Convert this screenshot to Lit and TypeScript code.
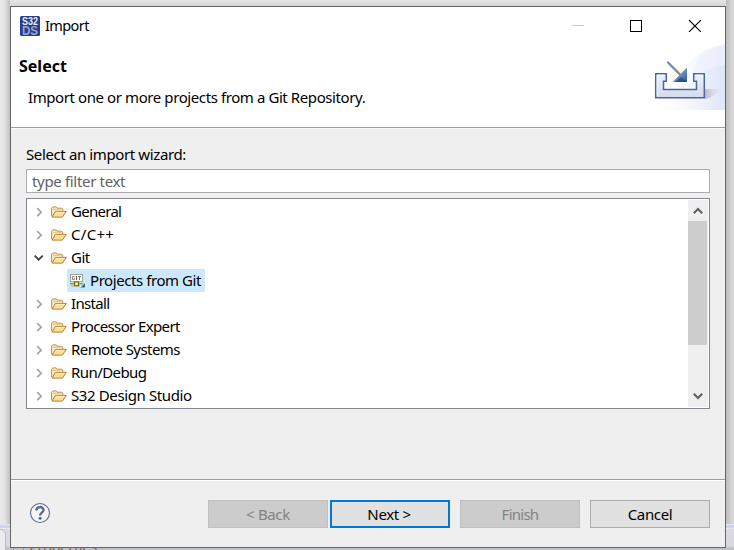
import { LitElement, html, css } from "lit";
import { customElement, state } from "lit/decorators.js";
import { classMap } from "lit/directives/class-map.js";

interface Node { label: string; open?: boolean; child?: boolean; ls: string; }

const NODES: Node[] = [
  { label: "General", ls: "a" },
  { label: "C/C++", ls: "b" },
  { label: "Git", open: true, ls: "c" },
  { label: "Projects from Git", child: true, ls: "d" },
  { label: "Install", ls: "e" },
  { label: "Processor Expert", ls: "f" },
  { label: "Remote Systems", ls: "g" },
  { label: "Run/Debug", ls: "h" },
  { label: "S32 Design Studio", ls: "i" },
];

const folder = html`<svg class="folder" width="16" height="14" viewBox="0 0 16 14">
  <path d="M.6 11.2V3.2L1.8 1.9h3.4l1 1.3h4.6l.9 1v1.8" fill="#fbeec6" stroke="#c48a44"/>
  <path d="M1.8 4.2h8.8" stroke="#e3b878"/>
  <path d="M1 12.1 4.4 6.4h10.9L11.4 12.1Z" fill="#fbdf94" stroke="#b97a34" stroke-linejoin="round"/>
  <path d="M4.9 7.4h8.6" stroke="#fff0c0"/>
</svg>`;

const gitIcon = html`<svg class="git" width="16" height="16" viewBox="0 0 16 16">
  <rect x=".5" y="1.5" width="12" height="7" fill="#fff" stroke="#a3a394"/>
  <g fill="none">
    <path d="M4.6 3.5H2.5v3h2V5.3H3.7" stroke="#8c8c8c"/>
    <path d="M6.5 3v4" stroke="#c23a4b"/>
    <path d="M8 3.5h3M9.5 3.5V7" stroke="#3b9a58"/>
    <path d="M0 10.5h13" stroke="#8f9061"/>
    <path d="M0 11.5h13" stroke="#c7c98a"/>
    <path d="M1 13h9" stroke="#a5a58c"/>
  </g>
  <rect x="4.5" y="9" width="4" height="3.6" fill="#fff36b" stroke="#66661c"/>
  <path d="M15 10V14.5h-4.5Z" fill="#2c6ca4"/>
</svg>`;

@customElement("app-root")
export class AppRoot extends LitElement {
  @state() private selected = "Projects from Git";

  static styles = css`
    :host { display: block; position: relative; width: 734px; height: 550px; overflow: hidden;
      font: 15px/20px "Noto Sans", "Open Sans", sans-serif; color: #000; background: #dedede; }
    * { box-sizing: border-box; }
    svg { display: block; flex: none; }
    .backdrop { position: absolute; inset: 0; background: #e3e3e3; }
    .left { position: absolute; left: 0; top: 0; bottom: 0; width: 10px;
      background: linear-gradient(90deg, #e9e9e9, #e1e1e1 50%, #c0c0c0); }
    .right { position: absolute; right: 0; top: 0; bottom: 0; width: 8px;
      background: linear-gradient(90deg, #bdbdbd, #d2d2d2 60%, #d9d9d9); }
    .top { position: absolute; left: 0; right: 0; top: 0; height: 6px; background: linear-gradient(#e6e6e6, #d7d7d7); }
    .band { position: absolute; left: 0; right: 0; top: 524px; height: 26px;
      background: linear-gradient(#e5e7ef 0 1px, #cfd5e9 1px 4px, #e6e6ec 4px 5px, #d9d9e1 5px 22px, #c0c0c7 24px); }
    .tab { position: absolute; left: -8px; top: 529px; width: 14px; height: 30px; background: #ececee;
      border: 1px solid #bbbcc4; border-radius: 0 6px 0 0; }
    .behind { position: absolute; left: 29px; top: 536px; color: #8a6e68; letter-spacing: -.5px; }
    .tabicon { position: absolute; left: 13px; top: 545px; width: 11px; height: 10px; border: 1px solid #999aa3; }
    .window { position: relative; display: flex; flex-direction: column; width: 716px; height: 542px;
      margin: 0 0 0 10px; top: 6px; border: 1px solid #656565; background: #efefef; }
    .titlebar { height: 38px; flex: none; background: #fff; display: flex; align-items: center; padding: 0 24px 0 9px; }
    .titlebar .name { margin: 0 auto 2px 5px; letter-spacing: -.95px; }
    .titlebar .name { font-size: 14.5px; letter-spacing: -.6px; }
    .ctl { margin-left: 46px; position: relative; top: -.5px; }
    .header { height: 83px; flex: none; background: #fff; border-bottom: 1px solid #9c9d9d; display: flex; justify-content: space-between; }
    .heading { padding: 11px 0 0 8px; }
    h1 { margin: 0; font-size: 16px; line-height: 20px; font-weight: 700; letter-spacing: 0; }
    .heading p { margin: 11px 0 0 9px; line-height: 20px; letter-spacing: -.41px; white-space: nowrap; }
    .art { margin-top: -1px; }
    .body { flex: 1; border-top: 1px solid #fafafa; padding: 14px 15px 0; }
    .label { line-height: 22px; letter-spacing: -.38px; }
    .filter { height: 24px; margin-top: 4px; border: 1px solid #ababb0; background: #fff; color: #626262;
      padding: 0 5px; line-height: 22px; letter-spacing: -.33px; }
    .tree { height: 211px; margin-top: 5px; border: 1px solid #828790; background: #fff; display: flex; padding: 1px 1px 1px 0; }
    .rows { flex: 1; }
    .row { height: 23px; display: flex; align-items: center; padding-left: 7px; }
    .tw { width: 17px; display: flex; justify-content: flex-start; }
    .item { display: flex; align-items: center; height: 23px; line-height: 23px; white-space: nowrap; }
    .item .txt { margin-left: 4px; }
    .row.child .item { width: 138px; margin-left: 16px; padding: 0 4px 0 3px; }
    .row.child .item .txt { margin-left: 4px; }
    .selected .item { background: #cce8ff; }
    .a { letter-spacing: -.72px; } .b { letter-spacing: .3px; } .c { letter-spacing: -.5px; }
    .d { letter-spacing: -.43px; } .e { letter-spacing: -.65px; } .f { letter-spacing: -.63px; }
    .g { letter-spacing: -.57px; } .h { letter-spacing: -.57px; } .i { letter-spacing: -.38px; }
    .scroll { width: 20px; height: 207px; background: #efefef; display: flex; flex-direction: column; align-items: center; }
    .thumb { width: 19px; height: 124px; margin-right: 1px; background: #cdcdcd; }
    .arrow { height: 21px; margin-right: 1px; display: flex; align-items: center; }
    .arrow.down { margin-top: auto; height: 22px; }
    .footer { height: 68px; flex: none; border-top: 1px solid #9c9c9c; box-shadow: inset 0 1px #fff;
      padding: 20px 15px 0 18px; display: flex; align-items: flex-start; }
    .help { margin: 2px auto 0 0; }
    .btn { width: 120px; height: 28px; border: 1px solid #adadad; background: #e1e1e1; font: inherit; color: #000;
      padding: 1px 0 0; text-align: center; line-height: 25px; letter-spacing: -.35px; }
    .btn.primary { border: 2px solid #0078d7; margin-left: 2px; line-height: 23px; padding-right: 2px; }
    .btn.off { background: #ccc; border-color: #bfbfbf; color: #838383; }
    .btn.fin { letter-spacing: -.75px; }
    .gap { margin-left: 10px; }
  `;

  private row(n: Node) {
    return html`<div class=${classMap({ row: true, child: !!n.child, selected: n.label === this.selected })}
      @click=${() => (this.selected = n.label)}>
      <div class="tw">${n.child ? "" : n.open
        ? html`<svg width="10" height="8" viewBox="0 0 10 8"><path d="M.6 1.7 4.7 5.7 8.8 1.7" fill="none" stroke="#404040" stroke-width="1.8"/></svg>`
        : html`<svg width="10" height="10" viewBox="0 0 10 10"><path d="M3.2 1.2 7.2 5.2 3.2 9.2" fill="none" stroke="#a5a5a5" stroke-width="1.7"/></svg>`}</div>
      <div class="item">${n.child ? gitIcon : folder}<span class="txt ${n.ls}">${n.label}</span></div>
    </div>`;
  }

  render() {
    return html`
      <div class="backdrop"><div class="top"></div><div class="left"></div><div class="right"></div>
        <div class="band"></div><div class="tab"></div><div class="tabicon"></div><div class="behind">Properties</div></div>
      <div class="window">
        <div class="titlebar">
          <svg width="20" height="20" viewBox="0 0 20 20">
            <rect width="20" height="20" rx="1.5" fill="#273f8b"/>
            <text x="2" y="9" font-family="Liberation Sans" font-weight="700" font-size="10" fill="#e9edf8" textLength="16" lengthAdjust="spacingAndGlyphs">S32</text>
            <text x="2" y="18.5" font-family="Liberation Sans" font-weight="700" font-size="12" fill="#96a5d8" textLength="16" lengthAdjust="spacingAndGlyphs">DS</text>
          </svg>
          <span class="name">Import</span>
          <svg class="ctl" width="12" height="12" viewBox="0 0 12 12"><path d="M0 5.5h12" stroke="#c9c9c9"/></svg>
          <svg class="ctl" width="12" height="12" viewBox="0 0 12 12"><rect x=".5" y=".5" width="11" height="11" fill="none" stroke="#000"/></svg>
          <svg class="ctl" width="13" height="12" viewBox="0 0 13 12"><path d="M1 0l12 12M13 0l-12 12" stroke="#000" stroke-width="1.1"/></svg>
        </div>
        <div class="header">
          <div class="heading"><h1>Select</h1><p>Import one or more projects from a Git Repository.</p></div>
          <svg class="art" width="75" height="66" viewBox="0 0 75 66">
            <defs>
              <linearGradient id="w" x1="0" x2="1"><stop offset="0" stop-color="#fff" stop-opacity="0"/><stop offset="1" stop-color="#dfe6f8"/></linearGradient>
              <linearGradient id="t" x1="0" y1="0" x2="0" y2="1"><stop offset="0" stop-color="#edf1f7"/><stop offset="1" stop-color="#d3dced"/></linearGradient>
              <linearGradient id="ar" x1="0" y1="0" x2="1" y2="1"><stop offset="0" stop-color="#b9d0ea"/><stop offset="1" stop-color="#24539a"/></linearGradient>
              <linearGradient id="sh" x1="0" x2="1"><stop offset="0" stop-color="#b7a4b8" stop-opacity=".75"/><stop offset="1" stop-color="#d8d7ec" stop-opacity="0"/></linearGradient>
              <radialGradient id="gl"><stop offset="0" stop-color="#fff8c4"/><stop offset="1" stop-color="#fffce8" stop-opacity="0"/></radialGradient>
            </defs>
            <path d="M0 66C18 58 26 32 42 16C52 6 64 2 75 0V66Z" fill="url(#w)" opacity=".65"/>
            <path d="M2 66C26 60 32 46 48 30C58 24 66 22 75 21V66Z" fill="url(#w)"/>
            <path d="M47 16C54 8 64 3 75 0V21C64 22 53 25 43 34Z" fill="#e5ebfa" opacity=".35"/>
            <circle cx="28" cy="29" r="11" fill="url(#gl)"/>
            <path d="M55 45H72Q65 53 55 55Z" fill="url(#sh)"/>
            <path d="M5.7 29.7H16.3V37.3H13.5V45.5H46.5V37.3H43.7V29.7H54.3V53.8H5.7Z" fill="url(#t)" stroke="#47699f" stroke-width="1.5"/>
            <path d="M7.2 31.2h7.4M7.2 31.2V52M45.2 31.2h7.4" fill="none" stroke="#fff" opacity=".75"/>
            <path d="M18 18.5 30 30.5" stroke="#6d8cb8" stroke-width="2.3" stroke-linecap="round"/>
            <path d="M37 23.5V38H22.5Z" fill="url(#ar)"/>
            <path d="M37 38H25L31 33Z" fill="#1d4385" opacity=".7"/>
          </svg>
        </div>
        <div class="body">
          <div class="label">Select an import wizard:</div>
          <div class="filter">type filter text</div>
          <div class="tree">
            <div class="rows">${NODES.map((n) => this.row(n))}</div>
            <div class="scroll">
              <div class="arrow"><svg width="10" height="8" viewBox="0 0 10 8"><path d="M.8 6.3 5 2.1 9.2 6.3" fill="none" stroke="#606060" stroke-width="2.1"/></svg></div>
              <div class="thumb"></div>
              <div class="arrow down"><svg width="10" height="8" viewBox="0 0 10 8"><path d="M.8 1.7 5 5.9 9.2 1.7" fill="none" stroke="#606060" stroke-width="2.1"/></svg></div>
            </div>
          </div>
        </div>
        <div class="footer">
          <svg class="help" width="22" height="22" viewBox="0 0 22 22">
            <circle cx="11" cy="11" r="9.5" fill="#f6f6f6" stroke="#5c7093" stroke-width="1.1"/>
            <path d="M7.4 8.4C7.4 3.9 14.5 4 14.5 8.1C14.5 10.6 11.1 10.7 11.1 13.5" fill="none" stroke="#53678f" stroke-width="2.3"/>
            <circle cx="11.1" cy="16.3" r="1.5" fill="#53678f"/>
          </svg>
          <button class="btn off" disabled>&lt; Back</button>
          <button class="btn primary">Next &gt;</button>
          <button class="btn off fin gap" disabled>Finish</button>
          <button class="btn gap">Cancel</button>
        </div>
      </div>`;
  }
}
